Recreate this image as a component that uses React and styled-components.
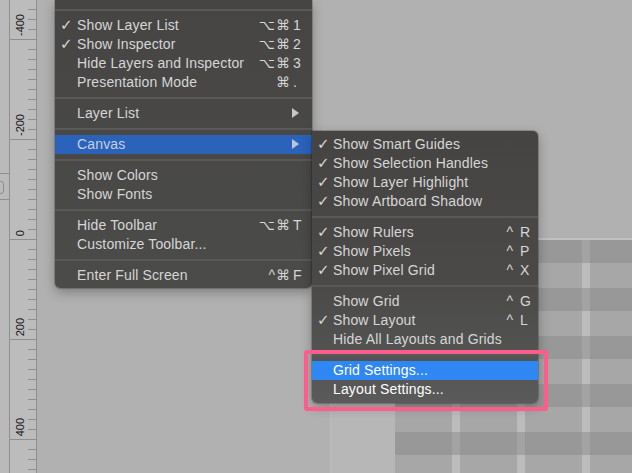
import styled, { createGlobalStyle } from "styled-components";

const GlobalStyle = createGlobalStyle`
  html, body {
    margin: 0;
    padding: 0;
    background: #b1b1b1;
  }
  body {
    overflow: hidden;
  }
`;

const Screen = styled.div`
  position: relative;
  display: flex;
  width: 632px;
  height: 473px;
  overflow: hidden;
  background: #b1b1b1;
  font-family: "Liberation Sans", Arial, sans-serif;
`;

const SideStrip = styled.div`
  width: 9px;
  flex-shrink: 0;
  display: flex;
  flex-direction: column;
  padding-top: 173px;
  border-right: 1px solid #8f8f8f;
  background: #bababa;
`;

const StripLine = styled.div`
  height: 1px;
  background: #8f8f8f;
`;

const StripTab = styled.div`
  width: 3px;
  height: 11px;
  margin: 7px 0 5px -1px;
  border: 1px solid #8f8f8f;
  border-radius: 0 3px 3px 0;
`;

const Ruler = styled.div`
  width: 26px;
  flex-shrink: 0;
  display: flex;
  flex-direction: column;
  overflow: hidden;
  border-right: 1px solid #8f8f8f;
  background: #bcbcbc;
`;

const RulerSegment = styled.div`
  flex-shrink: 0;
  height: 100px;
  box-sizing: border-box;
  display: flex;
  align-items: flex-end;
  padding: 0 0 3px 5px;
  border-bottom: 1px solid #8f8f8f;
  background: repeating-linear-gradient(to bottom, transparent 0 9px, #8f8f8f 9px 10px) right top / 8px 100% no-repeat;

  &:first-child {
    margin-top: -60px;
  }
`;

const RulerLabel = styled.span`
  writing-mode: vertical-rl;
  transform: rotate(180deg);
  font-size: 11px;
  line-height: 10px;
  color: #161616;
`;

const Canvas = styled.div`
  position: relative;
  flex: 1;
`;

const Artboard = styled.div`
  position: absolute;
  left: 293px;
  top: 238px;
  width: 340px;
  height: 260px;
  display: flex;
  padding-left: 64px;
  border-top: 2px solid #c1c1c1;
  border-left: 1px solid #bdbdbd;
  background: #b7b7b7;
`;

const LayoutGrid = styled.div`
  flex: 1;
  display: flex;
  flex-direction: column;
`;

const GridRow = styled.div`
  flex-shrink: 0;
  height: ${(p) => (p.$dark ? 23 : 25)}px;
  background: repeating-linear-gradient(
    to right,
    ${(p) => (p.$dark ? "#989898" : "#a7a7a7")} 0 57px,
    ${(p) => (p.$dark ? "#a3a3a3" : "#bcbcbc")} 57px 65px
  );
`;

const Menu = styled.div`
  position: absolute;
  left: 55px;
  top: 0;
  width: 257px;
  padding: 4px 0 3px;
  border-radius: 0 0 5px 5px;
  background: linear-gradient(to bottom, #464544, #4b4b4a);
  box-shadow: 0 4px 12px rgba(0, 0, 0, 0.3), 0 0 0 1px rgba(0, 0, 0, 0.18);
`;

const SubMenu = styled(Menu)`
  left: 312px;
  top: 131px;
  width: 226px;
  padding: 4px 0;
  border-radius: 0 5px 5px 5px;
  background: linear-gradient(to bottom, #454443 0%, #4a4948 55%, #5a5a5a 100%);
`;

const Separator = styled.div`
  height: 2px;
  margin: 5px 0;
  background: #5a5958;
`;

const tones = {
  normal: { bg: "transparent", fg: "#d6d6d6" },
  selected: { bg: "#2b63bb", fg: "#c6d0e1" },
  focused: { bg: "#2f87f4", fg: "#ffffff" },
  bright: { bg: "transparent", fg: "#ffffff" },
};

const Item = styled.div`
  display: flex;
  align-items: center;
  height: 19px;
  padding: 0 ${(p) => (p.$sub ? 8 : 9)}px 1px 5px;
  box-sizing: border-box;
  font-size: 14px;
  letter-spacing: 0.15px;
  white-space: nowrap;
  color: ${(p) => tones[p.$tone || "normal"].fg};
  background: ${(p) => tones[p.$tone || "normal"].bg};
`;

const Check = styled.span`
  width: ${(p) => (p.$sub ? 16 : 17)}px;
  box-sizing: border-box;
  font-family: "DejaVu Sans", sans-serif;
  font-size: 15px;
  line-height: 15px;
`;

const Label = styled.span`
  flex: 1;
`;

const Shortcut = styled.span`
  display: flex;
  font-family: "Liberation Sans", "DejaVu Sans", sans-serif;
`;

const Mods = styled.span`
  letter-spacing: 1px;
`;

const Key = styled.span`
  width: 10px;
  margin-left: ${(p) => (p.$wide ? 6 : 2)}px;
`;

const Arrow = styled.span`
  width: 0;
  height: 0;
  margin-right: 4px;
  border-top: 5px solid transparent;
  border-bottom: 5px solid transparent;
  border-left: 7px solid ${(p) => (p.$tone === "selected" ? "#b9c5da" : "#c6c6c6")};
`;

const Callout = styled.div`
  position: absolute;
  left: 304px;
  top: 350px;
  width: 244px;
  height: 61px;
  box-sizing: border-box;
  border: 4px solid #fd5d8c;
  border-radius: 3px;
`;

const mainItems = [
  "sep",
  { check: true, label: "Show Layer List", mods: "⌥⌘", key: "1" },
  { check: true, label: "Show Inspector", mods: "⌥⌘", key: "2" },
  { label: "Hide Layers and Inspector", mods: "⌥⌘", key: "3" },
  { label: "Presentation Mode", mods: "⌘", key: "." },
  "sep",
  { label: "Layer List", sub: true },
  "sep",
  { label: "Canvas", sub: true, tone: "selected" },
  "sep",
  { label: "Show Colors" },
  { label: "Show Fonts" },
  "sep",
  { label: "Hide Toolbar", mods: "⌥⌘", key: "T" },
  { label: "Customize Toolbar..." },
  "sep",
  { label: "Enter Full Screen", mods: "^⌘", key: "F" },
];

const canvasItems = [
  { check: true, label: "Show Smart Guides" },
  { check: true, label: "Show Selection Handles" },
  { check: true, label: "Show Layer Highlight" },
  { check: true, label: "Show Artboard Shadow" },
  "sep",
  { check: true, label: "Show Rulers", mods: "^", key: "R" },
  { check: true, label: "Show Pixels", mods: "^", key: "P" },
  { check: true, label: "Show Pixel Grid", mods: "^", key: "X" },
  "sep",
  { label: "Show Grid", mods: "^", key: "G" },
  { check: true, label: "Show Layout", mods: "^", key: "L" },
  { label: "Hide All Layouts and Grids" },
  "sep",
  { label: "Grid Settings...", tone: "focused" },
  { label: "Layout Settings...", tone: "bright" },
];

// the last segment runs past the bottom edge, so it carries no label
const rulerLabels = ["-400", "-200", "0", "200", "400", ""];

function MenuRows({ items, sub }) {
  return items.map((it, i) =>
    it === "sep" ? (
      <Separator key={i} />
    ) : (
      <Item key={i} $tone={it.tone} $sub={sub}>
        <Check $sub={sub}>{it.check ? "✓" : ""}</Check>
        <Label>{it.label}</Label>
        {it.key && (
          <Shortcut>
            <Mods>{it.mods}</Mods>
            <Key $wide={sub}>{it.key}</Key>
          </Shortcut>
        )}
        {it.sub && <Arrow $tone={it.tone} />}
      </Item>
    )
  );
}

export default function App() {
  return (
    <>
      <GlobalStyle />
      <Screen>
        <SideStrip>
          <StripLine />
          <StripTab />
          <StripLine />
        </SideStrip>
        <Ruler>
          {rulerLabels.map((l, i) => (
            <RulerSegment key={i}>
              {l && <RulerLabel>{l}</RulerLabel>}
            </RulerSegment>
          ))}
        </Ruler>
        <Canvas>
          <Artboard>
            <LayoutGrid>
              {Array.from({ length: 10 }, (_, i) => (
                <GridRow key={i} $dark={i % 2 === 0} />
              ))}
            </LayoutGrid>
          </Artboard>
        </Canvas>

        <Menu>
          <MenuRows items={mainItems} />
        </Menu>
        <SubMenu>
          <MenuRows items={canvasItems} sub />
        </SubMenu>
        <Callout />
      </Screen>
    </>
  );
}
